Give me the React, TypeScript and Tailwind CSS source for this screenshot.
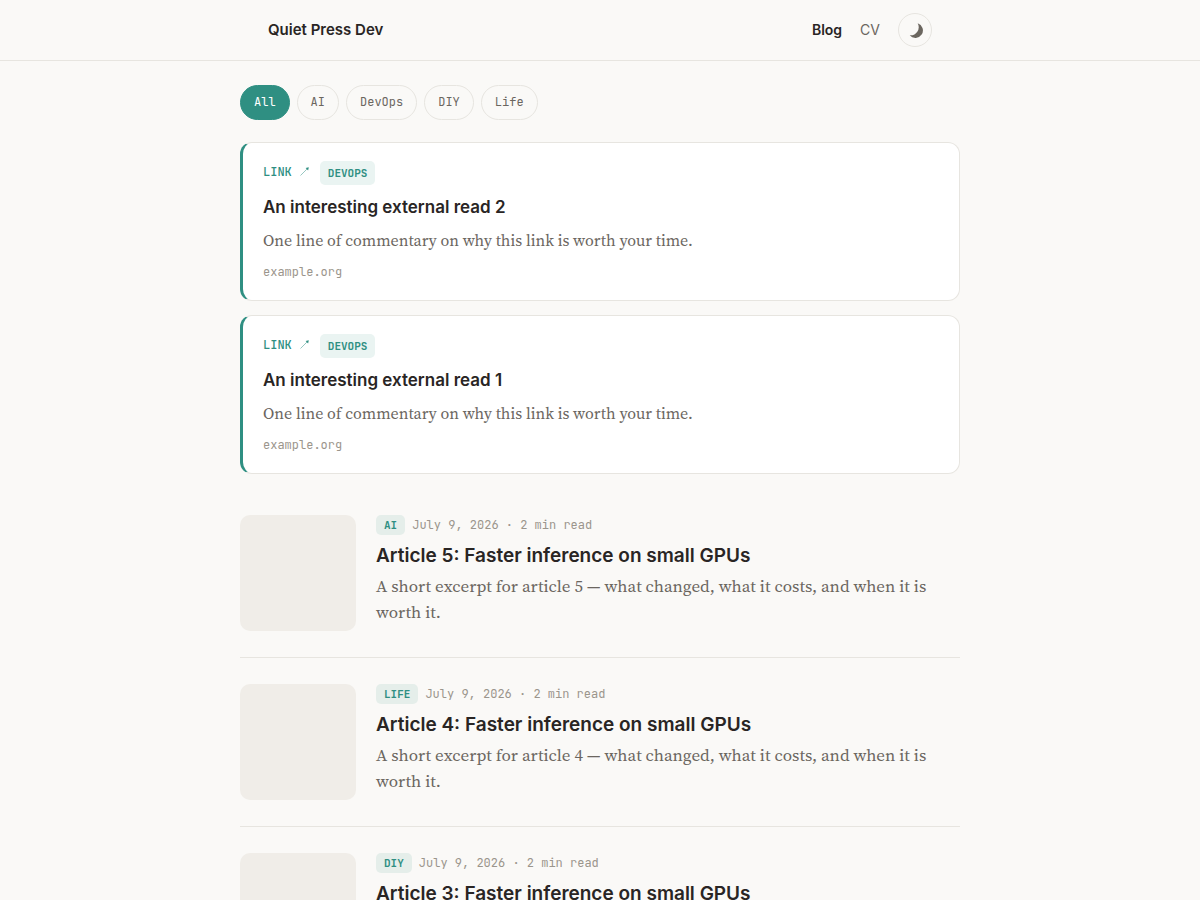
import React, { useState } from "react";

const mono = "font-['JetBrains_Mono','Liberation_Mono',monospace]";
const serif = "font-['Source_Serif_4','Liberation_Serif',serif]";

const topics = ["All", "AI", "DevOps", "DIY", "Life"];

const links = [
  { id: 2, topic: "DevOps", host: "example.org" },
  { id: 1, topic: "DevOps", host: "example.org" },
];

const articles = [
  { id: 5, topic: "AI" },
  { id: 4, topic: "Life" },
  { id: 3, topic: "DIY" },
];

function MoonIcon() {
  return (
    <svg viewBox="0 0 16 16" className="w-4 h-4" fill="currentColor" aria-hidden="true">
      <path d="M10.7 1.3A7.5 7.5 0 1 1 2.7 13.3A8.2 8.2 0 0 0 10.7 1.3Z" />
    </svg>
  );
}

function ArrowIcon() {
  return (
    <svg viewBox="0 0 12 12" className="w-3 h-3" aria-hidden="true">
      <path d="M1.5 9.5L8.5 2.5" stroke="currentColor" strokeWidth="0.5" fill="none" />
      <path d="M9.8 1.2L6.6 1.9L9.1 4.4Z" fill="currentColor" />
    </svg>
  );
}

function Header() {
  return (
    <header className="border-b border-[#e7e5e0]">
      <div className="max-w-[720px] h-15 mx-auto px-7 flex items-center justify-between">
        <a href="#" className="text-[15px] font-semibold">
          Quiet Press Dev
        </a>
        <nav className="flex items-center gap-[18px] text-sm">
          <a href="#blog" className="font-semibold">
            Blog
          </a>
          <a href="#cv" className="text-[#6b665f]">
            CV
          </a>
          <button
            aria-label="Toggle theme"
            className="w-[34px] h-[34px] rounded-full border border-[#e7e5e0] text-[#6b665f] flex items-center justify-center"
          >
            <MoonIcon />
          </button>
        </nav>
      </div>
    </header>
  );
}

function LinkCard({ id, topic, host }: { id: number; topic: string; host: string }) {
  return (
    <article className="bg-white border border-[#e7e5e0] border-l-3 border-l-[#2f8f82] rounded-xl px-5 py-[18px]">
      <div className={`${mono} flex items-start text-[#2f8f82]`}>
        <span className="flex items-center gap-[7px] text-xs leading-[22px] font-medium">
          LINK
          <ArrowIcon />
        </span>
        <span className="ml-[9px] px-2 h-6 rounded-[5px] bg-[#eaf4f2] text-[11px] leading-6 font-semibold uppercase">
          {topic}
        </span>
      </div>
      <h2 className="mt-[9px] text-[17px] leading-[26px] font-semibold">
        <a href="#">{`An interesting external read ${id}`}</a>
      </h2>
      <p className={`${serif} mt-[7px] text-base leading-[26px] text-[#6b665f]`}>
        One line of commentary on why this link is worth your time.
      </p>
      <p className={`${mono} mt-[9px] text-xs leading-5 text-[#9b958c]`}>{host}</p>
    </article>
  );
}

function ArticleRow({ id, topic }: { id: number; topic: string }) {
  return (
    <article className="flex gap-5 py-[26px] border-b border-[#e7e5e0]">
      <div className="w-[116px] h-[116px] shrink-0 rounded-[10px] bg-[#f0ede8]"></div>
      <div>
        <div className={`${mono} flex items-center gap-[7px]`}>
          <span className="px-2 rounded-[5px] bg-[#e5eeea] text-[#2f8f82] text-[11px] leading-5 font-semibold uppercase">
            {topic}
          </span>
          <span className="text-xs leading-5 text-[#9b958c]">July 9, 2026 · 2 min read</span>
        </div>
        <h2 className="mt-2 text-[19px] leading-[26px] font-semibold">
          <a href="#">{`Article ${id}: Faster inference on small GPUs`}</a>
        </h2>
        <p className={`${serif} mt-1 text-[17px] leading-[26px] text-[#6b665f]`}>
          {`A short excerpt for article ${id} — what changed, what it costs, and when it is worth it.`}
        </p>
      </div>
    </article>
  );
}

export default function App() {
  const [active, setActive] = useState("All");

  return (
    <div className="min-h-screen bg-[#faf9f7] text-[#292524] font-['Inter',sans-serif]">
      <Header />
      <main className="max-w-[720px] mx-auto pt-6">
        <div className={`${mono} flex flex-wrap gap-[7px] text-xs`}>
          {topics.map((topic) => (
            <button
              key={topic}
              onClick={() => setActive(topic)}
              className={
                active === topic
                  ? "h-[35px] px-[13px] pb-0.5 rounded-full border border-[#2f8f82] bg-[#2f8f82] text-white"
                  : "h-[35px] px-[13px] pb-0.5 rounded-full border border-[#e7e5e0] text-[#6b665f]"
              }
            >
              {topic}
            </button>
          ))}
        </div>
        <section className="mt-[22px] flex flex-col gap-[14px]">
          {links.map((link) => (
            <LinkCard key={link.id} {...link} />
          ))}
        </section>
        <section className="mt-[15px]">
          {articles.map((article) => (
            <ArticleRow key={article.id} {...article} />
          ))}
        </section>
      </main>
    </div>
  );
}
